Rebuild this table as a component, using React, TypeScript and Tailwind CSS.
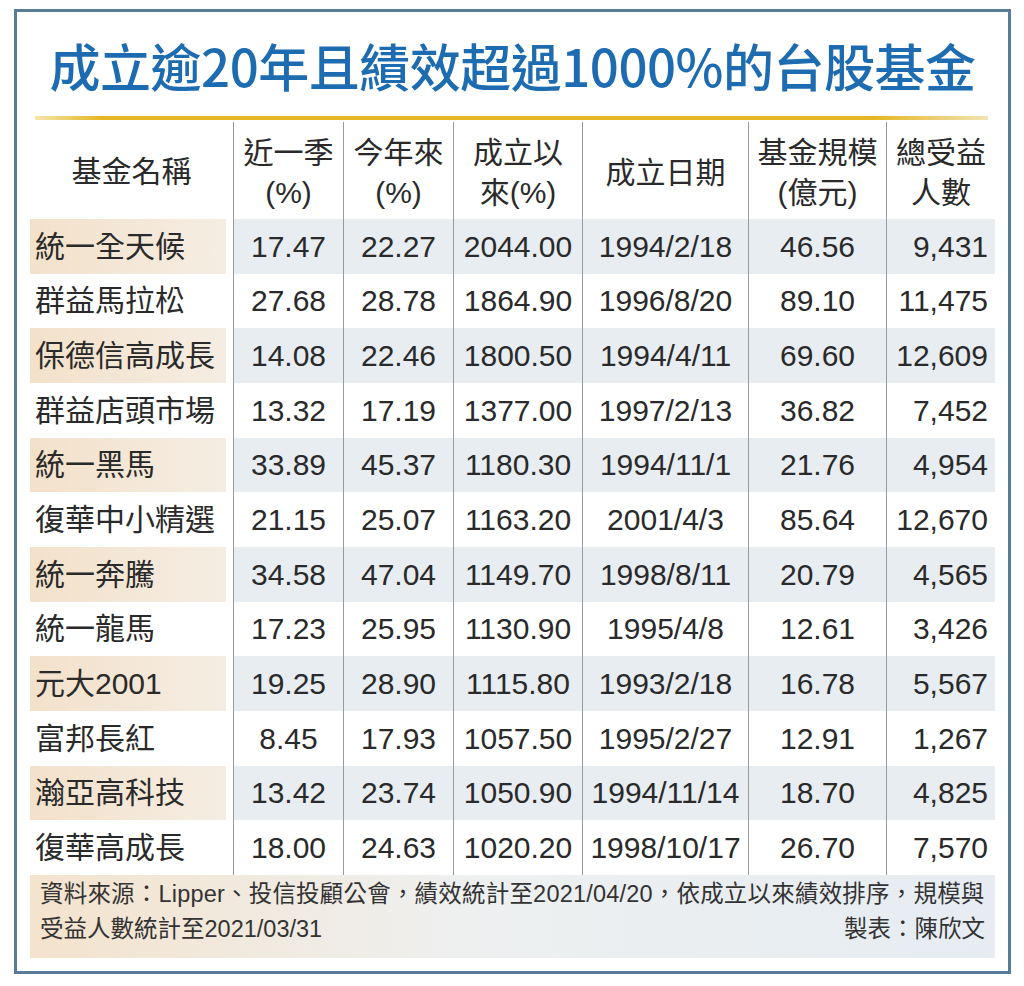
import React from "react";

const rows: string[][] = [
  ["統一全天候", "17.47", "22.27", "2044.00", "1994/2/18", "46.56", "9,431"],
  ["群益馬拉松", "27.68", "28.78", "1864.90", "1996/8/20", "89.10", "11,475"],
  ["保德信高成長", "14.08", "22.46", "1800.50", "1994/4/11", "69.60", "12,609"],
  ["群益店頭市場", "13.32", "17.19", "1377.00", "1997/2/13", "36.82", "7,452"],
  ["統一黑馬", "33.89", "45.37", "1180.30", "1994/11/1", "21.76", "4,954"],
  ["復華中小精選", "21.15", "25.07", "1163.20", "2001/4/3", "85.64", "12,670"],
  ["統一奔騰", "34.58", "47.04", "1149.70", "1998/8/11", "20.79", "4,565"],
  ["統一龍馬", "17.23", "25.95", "1130.90", "1995/4/8", "12.61", "3,426"],
  ["元大2001", "19.25", "28.90", "1115.80", "1993/2/18", "16.78", "5,567"],
  ["富邦長紅", "8.45", "17.93", "1057.50", "1995/2/27", "12.91", "1,267"],
  ["瀚亞高科技", "13.42", "23.74", "1050.90", "1994/11/14", "18.70", "4,825"],
  ["復華高成長", "18.00", "24.63", "1020.20", "1998/10/17", "26.70", "7,570"],
];

const headers: string[][] = [
  ["基金名稱"],
  ["近一季", "(%)"],
  ["今年來", "(%)"],
  ["成立以", "來(%)"],
  ["成立日期"],
  ["基金規模", "(億元)"],
  ["總受益", "人數"],
];

const font = { fontFamily: '"Liberation Sans", "Noto Sans CJK TC", sans-serif' };
const titleFont = { fontFamily: '"Noto Sans CJK TC", "Liberation Sans", sans-serif' };

export default function App() {
  return (
    <div className="w-[1024px] h-[986px] bg-white pt-[9px] pl-[14px]" style={font}>
      <div className="w-[997px] h-[965px] border-[3px] border-[#587c97] bg-white flex flex-col">
        {/* Title */}
        <div className="h-[104px] flex items-center justify-center pt-[2px]">
          <h1
            className="text-[51px] leading-none font-medium text-[#1d6cb1] tracking-[-0.5px]"
            style={titleFont}
          >
            成立逾20年且績效超過1000%的台股基金
          </h1>
        </div>
        {/* Gold line */}
        <div className="ml-[18px] w-[953px] h-[4px] bg-[linear-gradient(to_right,#f6e6ad_0%,#e4b622_7%,#e4b622_88%,#f2e3b6_100%)]" />
        {/* Table */}
        <div className="ml-[13px] w-[965px] text-[30px] text-[#2a2a2a]">
          <div className="grid grid-cols-[203px_110px_110px_129px_166px_138px_109px] h-[99px]">
            {headers.map((h, i) => (
              <div
                key={i}
                className={`flex flex-col items-center justify-center pt-[5px] leading-[40px] ${
                  i > 0 ? "border-l border-[#9a9a9a] mt-[2px]" : ""
                }`}
              >
                {h.map((t, j) => (
                  <span key={j} className="whitespace-nowrap">
                    {t}
                  </span>
                ))}
              </div>
            ))}
          </div>
          {rows.map((r, ri) => {
            const shaded = ri % 2 === 0;
            return (
              <div
                key={ri}
                className="grid grid-cols-[203px_110px_110px_129px_166px_138px_109px] h-[54.67px]"
              >
                <div className="pr-[7px] h-full">
                  <div
                    className={`h-full flex items-center pl-[5px] whitespace-nowrap ${
                      shaded ? "bg-[linear-gradient(to_right,#f3e1ca,#f5ede3)]" : ""
                    }`}
                  >
                    {r[0]}
                  </div>
                </div>
                {r.slice(1).map((c, ci) => (
                  <div
                    key={ci}
                    className={`border-l border-[#9a9a9a] flex items-center whitespace-nowrap ${
                      ci === 5 ? "justify-end pr-[7px]" : "justify-center"
                    } ${shaded ? "bg-[#e8edf2]" : ""}`}
                  >
                    {c}
                  </div>
                ))}
              </div>
            );
          })}
          {/* Footer */}
          <div className="h-[83px] pt-[2px] px-[10px] text-[23.5px] leading-[35px] text-[#333333] bg-[linear-gradient(to_right,#f4e3cd_0%,#eef0f0_45%,#e6ecf2_100%)]">
            <div className="whitespace-nowrap tracking-[0.2px]">
              資料來源：Lipper、投信投顧公會，績效統計至2021/04/20，依成立以來績效排序，規模與
            </div>
            <div className="flex justify-between whitespace-nowrap">
              <span>受益人數統計至2021/03/31</span>
              <span>製表：陳欣文</span>
            </div>
          </div>
        </div>
      </div>
    </div>
  );
}
